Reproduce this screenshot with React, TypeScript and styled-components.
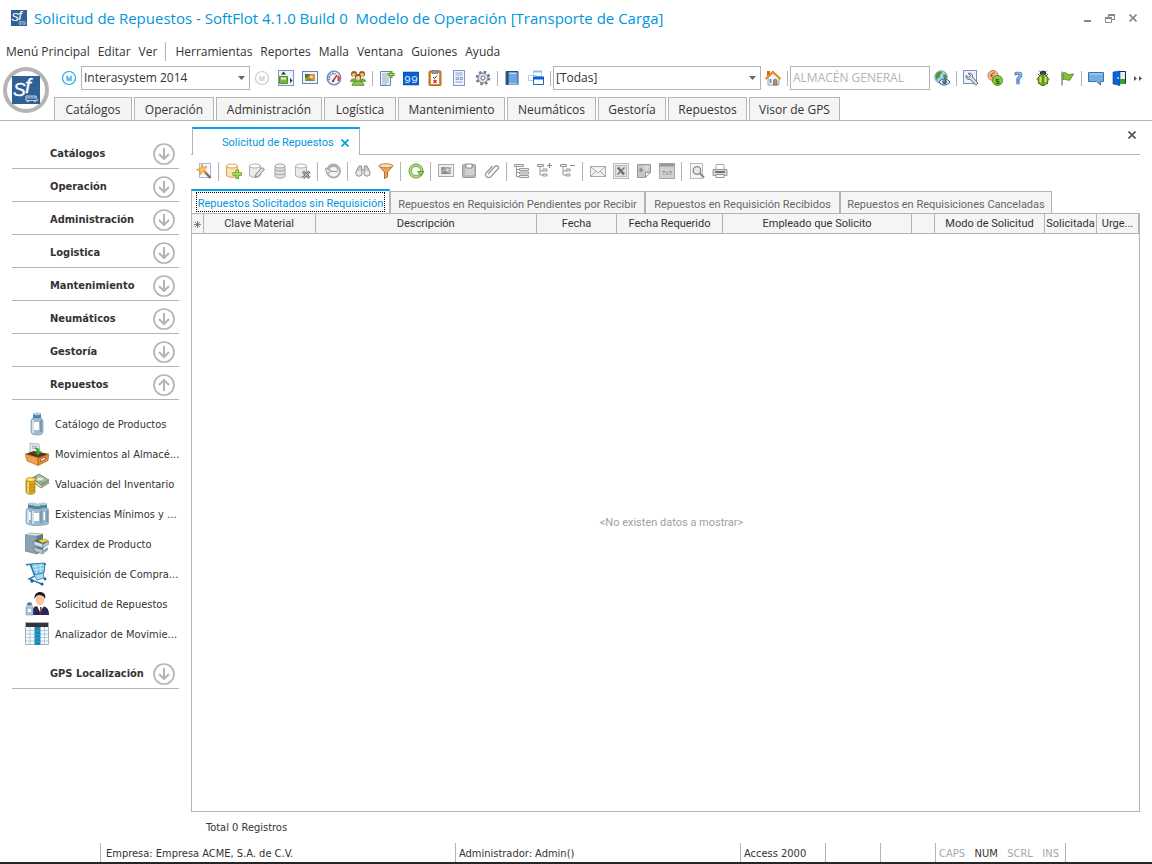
import React from "react";
import styled, { createGlobalStyle, css } from "styled-components";

const ui = `"Open Sans", "Noto Sans", sans-serif`;
const compact = `"DejaVu Sans Condensed", "DejaVu Sans", sans-serif`;
const gridFont = `Roboto, "Liberation Sans", sans-serif`;
const line = "#b4b4b4";
const blue = "#0096dc";
const accent = "#00a2f4";

const GlobalStyle = createGlobalStyle`
  *, *::before, *::after { box-sizing: border-box; }
  body { margin: 0; background: #fff; color: #333; font-family: ${ui}; font-size: 12px; }
  button, select, input { font: inherit; color: inherit; margin: 0; }
  ul { list-style: none; margin: 0; padding: 0; }
`;

const Page = styled.div`
  display: flex;
  flex-direction: column;
  min-height: 100vh;
`;

/* ---------- title bar and menu ---------- */

const TitleBar = styled.header`
  display: flex;
  align-items: center;
  gap: 7px;
  height: 37px;
  padding: 0 11px 1px;
`;
const Title = styled.h1`
  flex: 1;
  margin: 0;
  font-size: 15px;
  font-weight: 400;
  line-height: 20px;
  color: ${blue};
  white-space: pre;
`;
const WindowButtons = styled.div`
  display: flex;
  gap: 7px;
`;
const bareButton = css`
  display: flex;
  align-items: center;
  justify-content: center;
  border: 0;
  padding: 0;
  background: none;
`;
const WindowButton = styled.button`
  ${bareButton}
  width: 16px;
  height: 16px;
`;
const MenuBar = styled.nav`
  display: flex;
  align-items: center;
  height: 29px;
  padding-left: 2px;
`;
const MenuItem = styled.button`
  ${bareButton}
  padding: 0 4px;
  line-height: 20px;
  white-space: nowrap;
`;
const MenuRule = styled.span`
  width: 1px;
  height: 19px;
  margin: 0 5px 0 4px;
  background: ${line};
`;

/* ---------- main tool bar ---------- */

const Ribbon = styled.div`
  display: flex;
  border-bottom: 1px solid ${line};
`;
const LogoBox = styled.div`
  flex: none;
  width: 54px;
  padding: 1px 0 0 3px;
`;
const RibbonBody = styled.div`
  flex: 1;
  min-width: 0;
`;
const ToolRow = styled.div`
  display: flex;
  align-items: center;
  height: 24px;
  padding-left: 3px;
  margin-bottom: 7px;
`;
const ToolButton = styled.button<{ $w?: number }>`
  ${bareButton}
  flex: none;
  width: ${(p) => p.$w ?? 24}px;
  height: 24px;
`;
const Divider = styled.span<{ $w?: number }>`
  flex: none;
  display: flex;
  justify-content: center;
  width: ${(p) => p.$w ?? 5}px;
  &::before {
    content: "";
    width: 1px;
    height: ${(p) => (p.$w ? 19 : 15)}px;
    background: ${line};
  }
`;
const Combo = styled.label<{ $w: number }>`
  flex: none;
  display: grid;
  align-items: center;
  width: ${(p) => p.$w}px;
  height: 24px;
  border: 1px solid ${line};
  > * { grid-area: 1 / 1; }
  svg { justify-self: end; margin-right: 4px; pointer-events: none; }
`;
const Select = styled.select`
  appearance: none;
  width: 100%;
  height: 22px;
  padding: 0 18px 2px 2px;
  border: 0;
  border-radius: 0;
  background: none;
  outline: none;
`;
const StoreInput = styled.input`
  flex: none;
  width: 140px;
  height: 24px;
  padding: 0 2px 2px;
  border: 1px solid ${line};
  background: #fff;
  color: #b4b4b4;
`;
const ModuleTabs = styled.nav`
  display: flex;
  gap: 2px;
`;
const ModuleTab = styled.button<{ $w: number }>`
  width: ${(p) => p.$w}px;
  height: 23px;
  padding: 1px 0 0;
  border: 1px solid ${line};
  border-bottom: 0;
  background: #f5f5f5;
  line-height: 21px;
  white-space: nowrap;
`;

/* ---------- side bar ---------- */

const Body = styled.div`
  flex: 1;
  display: flex;
`;
const SideBar = styled.aside`
  flex: none;
  width: 191px;
  padding: 15px 12px 0;
  font-family: ${compact};
  font-size: 11px;
`;
const SectionButton = styled.button`
  display: flex;
  align-items: center;
  justify-content: space-between;
  width: 167px;
  height: 33px;
  padding: 3px 4px 0 38px;
  border: 0;
  border-bottom: 1px solid ${line};
  background: none;
  font-weight: 700;
  white-space: nowrap;
`;
const SectionList = styled.ul`
  && { padding: 9px 0 7px; }
`;
const SideLink = styled.a`
  display: flex;
  align-items: center;
  gap: 6px;
  height: 30px;
  padding-left: 13px;
  color: #333;
  text-decoration: none;
  white-space: nowrap;
  svg { flex: none; }
`;

/* ---------- document ---------- */

const Doc = styled.main`
  flex: 1;
  min-width: 0;
  display: flex;
  flex-direction: column;
  padding: 6px 12px 0 0;
  font-family: ${gridFont};
  font-size: 11px;
`;
const DocTabs = styled.div`
  display: flex;
  justify-content: space-between;
  align-items: flex-start;
  height: 28px;
  border-bottom: 1px solid ${line};
`;
const DocTab = styled.div`
  display: flex;
  align-items: center;
  justify-content: space-between;
  width: 168px;
  height: 28px;
  margin-left: 1px;
  padding: 1px 9px 0 29px;
  border: 1px solid ${line};
  border-top: 2px solid ${accent};
  border-bottom: 0;
  background: #fff;
  color: ${blue};
  white-space: nowrap;
`;
const CloseButton = styled.button`
  ${bareButton}
  width: 10px;
  height: 16px;
`;
const CloseAll = styled(CloseButton)`
  margin-right: 3px;
`;
const DocTools = styled.div`
  display: flex;
  align-items: center;
  height: 34px;
  padding: 0 0 2px 1px;
`;
const ViewTabs = styled.div`
  display: flex;
  align-items: flex-end;
  height: 24px;
`;
const ViewTab = styled.button<{ $w: number; $active?: boolean }>`
  ${bareButton}
  width: ${(p) => p.$w}px;
  height: ${(p) => (p.$active ? 24 : 22)}px;
  border: 1px solid ${line};
  border-bottom: 0;
  background: #f5f5f5;
  color: #666;
  white-space: nowrap;
  ${(p) =>
    p.$active &&
    css`
      border-top: 2px solid ${accent};
      background: #fff;
      color: ${blue};
      span { outline: 1px dotted #000; }
    `}
  span { padding: 4px 1px 0; line-height: 14px; }
`;
const GridFrame = styled.section`
  flex: 1;
  display: flex;
  flex-direction: column;
  border: 1px solid ${line};
`;
const Table = styled.table`
  width: 100%;
  table-layout: fixed;
  border-collapse: collapse;
`;
const Th = styled.th<{ $w?: number }>`
  width: ${(p) => (p.$w ? `${p.$w}px` : "auto")};
  height: 19px;
  padding: 2px 0 0;
  border-right: 1px solid ${line};
  border-bottom: 1px solid ${line};
  background: #f5f5f5;
  font-weight: 400;
  text-align: center;
  line-height: 14px;
  white-space: nowrap;
  svg { display: block; margin: 0 auto; }
`;
const Empty = styled.p`
  flex: 1;
  display: flex;
  align-items: center;
  justify-content: center;
  margin: 0;
  padding-left: 12px;
  color: #a0a0a0;
`;
const Total = styled.p`
  margin: 0;
  padding: 8px 15px 7px;
  font-family: ${compact};
  line-height: 16px;
`;

/* ---------- status bar ---------- */

const StatusBar = styled.footer`
  display: flex;
  height: 21px;
  padding-left: 100px;
  border-bottom: 2px solid #262626;
  font-family: ${compact};
  font-size: 11px;
  line-height: 21px;
`;
const StatusCell = styled.div<{ $w?: number }>`
  flex: ${(p) => (p.$w ? `none` : "1")};
  width: ${(p) => (p.$w ? `${p.$w}px` : "auto")};
  padding-left: 3px;
  border-left: 1px solid ${line};
  white-space: nowrap;
`;
const Company = styled(StatusCell)`
  padding-left: 5px;
`;
const Keys = styled(StatusCell)`
  display: flex;
  justify-content: space-between;
  padding-right: 6px;
`;
const Key = styled.span<{ $on?: boolean }>`
  color: ${(p) => (p.$on ? "#333" : "#a8a8a8")};
`;

/* ---------- drawings ---------- */

const I = ({ children, s = 16, v = 16 }: { children: React.ReactNode; s?: number; v?: number }) => (
  <svg width={s} height={s} viewBox={`0 0 ${v} ${v}`} fill="none" aria-hidden="true">
    {children}
  </svg>
);

const Emblem = ({ s }: { s: number }) => (
  <svg width={s} height={s} viewBox="0 0 28 28" aria-hidden="true">
    <rect width="28" height="28" fill="#2f6096" />
    <text x="1" y="20" fontFamily="Liberation Sans" fontStyle="italic" fontSize="19" fill="#fff" stroke="#fff" strokeWidth=".3">S</text>
    <text x="13" y="17" fontFamily="Liberation Sans" fontStyle="italic" fontSize="21" fill="#fff" stroke="#fff" strokeWidth=".3">f</text>
    <path d="M14 20h10l1.500 4.500H14z" fill="#2f6096" stroke="#b8cee2" />
    <path d="M17 20v2M20 20v2M23 20v2M14 22h10" stroke="#b8cee2" strokeWidth=".8" />
    <circle cx="16" cy="25" r="1.200" fill="#b8cee2" />
    <circle cx="23" cy="25" r="1.200" fill="#b8cee2" />
  </svg>
);
const Logo = () => (
  <svg width="46" height="46" viewBox="0 0 46 46" aria-hidden="true">
    <circle cx="23" cy="23" r="21" fill="#fff" stroke="#b4b4b4" strokeWidth="4" />
    <svg x="9" y="9" width="28" height="28"><Emblem s={28} /></svg>
  </svg>
);

const Mark = ({ c }: { c: string }) => (
  <I><circle cx="8" cy="8" r="6.500" stroke={c} strokeWidth="1.200" /><text x="5" y="10.500" fontFamily="Liberation Sans" fontSize="7" fill={c} stroke={c} strokeWidth=".3">M</text></I>
);
const LayoutIcon = () => (
  <I><rect x=".5" y=".5" width="15" height="15" fill="#edf3fb" stroke="#7d95c8" /><path d="M3 4.500l2.500-3 2.500 3zM12 8l2.500 2.500L12 13z" fill="#333" /><path d="M1.500 6.500h8v7h-8z" fill="#7cb342" stroke="#5b8c28" /><path d="M3 8.500h5" stroke="#e6f5d0" strokeWidth="2" /></I>
);
const PictureIcon = ({ gray }: { gray?: boolean }) => (
  <I><rect x=".5" y="1.500" width="15" height="12" fill={gray ? "#eee" : "#eef4fc"} stroke={gray ? "#aaa" : "#5f83c0"} /><path d="M3 4h10v7H3z" fill={gray ? "#b5b5b5" : "#d89a3c"} /><path d="M3 4h5l-3 4H3z" fill={gray ? "#999" : "#3d7a2c"} /><path d="M3 11l3-3 7 3z" fill={gray ? "#888" : "#5f9c3c"} /><circle cx="9.500" cy="7" r="2" fill={gray ? "#dcdcdc" : "#ffe07a"} stroke={gray ? "#888" : "#b5651d"} strokeWidth=".6" /></I>
);
const GaugeIcon = () => (
  <I><circle cx="8" cy="8" r="6.800" fill="#f4f8fd" stroke="#7184aa" strokeWidth="1.300" /><path d="M3.500 10a4.500 4.500 0 0 1 6-6" stroke="#4a7fd0" strokeWidth="2" strokeDasharray="1.500 1" /><path d="M12 6a4.500 4.500 0 0 1 0 5" stroke="#d33" strokeWidth="2" /><path d="M7 11l4-6" stroke="#c23a2b" strokeWidth="1.500" /><circle cx="7" cy="11" r="1.200" fill="#555" /></I>
);
const PeopleIcon = () => (
  <I><circle cx="4" cy="4" r="3" fill="#9a5a22" /><circle cx="12" cy="4" r="3" fill="#9a5a22" /><circle cx="4" cy="5" r="2" fill="#f0c08c" /><circle cx="12" cy="5" r="2" fill="#f0c08c" /><path d="M0 12c0-5 8-5 8 0zM8 12c0-5 8-5 8 0z" fill="#6fa83c" /><path d="M2 15.500c0-6 12-6 12 0z" fill="#8cc152" stroke="#3e7a1c" strokeWidth=".6" /><circle cx="8" cy="7" r="3" fill="#8c4f1c" /><circle cx="8" cy="8" r="2.200" fill="#f5cda0" /></I>
);
const DocPlusIcon = () => (
  <I><path d="M1.500 1.500h10v14h-10z" fill="#f3f7fc" stroke="#6b86b5" /><path d="M3 4h5M3 6h5M3 8h7M3 10h7M3 12h7M3 14h5" stroke="#8da5cc" /><path d="M8.500 4.500h7M12 1v7" stroke="#4e8f26" strokeWidth="3" /><path d="M9 4.500h6M12 1.500v6" stroke="#a4d65e" /></I>
);
const NinesIcon = () => (
  <I><rect y="2" width="16" height="13" fill="#0b5fd0" stroke="#083f92" strokeWidth=".5" /><text x="1" y="12.500" fontFamily="Liberation Mono" fontSize="11.500" fill="#d7ecff">99</text></I>
);
const ClipboardIcon = () => (
  <I><rect x="2" y="1" width="12" height="14.500" rx="1" fill="#dc8a30" stroke="#b56a19" /><path d="M4 3h8v11H4z" fill="#fff" /><path d="M5 .5h6v3H5z" fill="#8e9aa8" stroke="#5d6670" strokeWidth=".6" /><path d="M6 7l1.500 1.500L10 5.500" stroke="#333" /><path d="M6.500 10l3 3M9.500 10l-3 3" stroke="#c22" strokeWidth="1.200" /></I>
);
const FormIcon = () => (
  <I><rect x="2.500" y=".5" width="11" height="15" fill="#eef3fb" stroke="#8296c4" /><path d="M4.500 3h7M4.500 5h7M4.500 12h7" stroke="#8ba3d0" /><path d="M5 7.500h2.500v2H5zM9 7.500h2.500v2H9z" fill="#fff" stroke="#6f89bd" strokeWidth=".8" /></I>
);
const GearIcon = () => (
  <I><circle cx="8" cy="8" r="6.200" stroke="#6c7788" strokeWidth="2.200" strokeDasharray="2.450 2.420" /><circle cx="8" cy="8" r="5" fill="#dfe4ea" stroke="#6c7788" /><circle cx="8" cy="8" r="2" fill="#fff" stroke="#6c7788" /></I>
);
const BookIcon = () => (
  <I><path d="M2 1.500h12v13H2z" fill="#6fa6dc" stroke="#2a5288" /><path d="M2.500 2h2v12h-2z" fill="#23426b" /><path d="M6 3.500h6" stroke="#c6e0f6" /><path d="M4.500 14h9" stroke="#dce9f5" /></I>
);
const WindowsIcon = () => (
  <I><path d="M5.500 1.500h8v5h-8z" fill="#fff" stroke="#a9cdf5" /><path d="M5 1.500h9" stroke="#8fc0f2" strokeWidth="2" /><path d="M.5 5.500h8v5h-8z" fill="#fff" stroke="#a9cdf5" /><path d="M5.500 7.500h10v7h-10z" fill="#fff" stroke="#1668c8" /><path d="M5 8h11" stroke="#0b5fd0" strokeWidth="3" /></I>
);
const HomeIcon = () => (
  <I><path d="M2 1h3v5H2z" fill="#c86a20" /><path d="M3 8l5-5 6 5v7H3z" fill="#eef5fc" stroke="#7da7cf" /><path d="M0.500 9L8 2l7.500 7" stroke="#ef8a1c" strokeWidth="2.200" /><path d="M8.500 15v-4a1.700 1.700 0 0 1 3.500 0v4z" fill="#c58a5a" stroke="#8b5528" strokeWidth=".7" /><path d="M4 10h3M4 12h3M5.500 9v4" stroke="#5b86b5" strokeWidth=".8" /></I>
);
const GlobeEyeIcon = () => (
  <I><circle cx="7" cy="7" r="6.200" fill="#a8d0ee" stroke="#7898b8" /><path d="M2 4c2-3 5-3 6-2s-2 2-2 4-3 2-3 4S1 7 2 4zM9 5c2-2 4 0 4 2s-2 3-3 2z" fill="#4d9a33" /><path d="M5 12c2-4 8-4 11 0-3 4-9 4-11 0z" fill="#dfe6f5" stroke="#3f5080" /><circle cx="10.500" cy="11.800" r="2.200" fill="#35507f" /><circle cx="10" cy="11" r=".7" fill="#fff" /></I>
);
const WrenchIcon = () => (
  <I><rect x=".5" y=".5" width="13" height="13" fill="#eef3fb" stroke="#7d8fc0" /><path d="M5 3.500c2.500-1 5 .5 4.500 3.500l5.500 6-2.300 2.300-5.500-6C4 10 2.500 8 3 5.500l2.500 2 2-2z" fill="#d5dce6" stroke="#4d5b78" strokeWidth=".9" /></I>
);
const CoinsIcon = () => (
  <I><circle cx="6" cy="5.500" r="5" fill="#f7c096" stroke="#c76a31" /><path d="M8 3.500a2.500 2.500 0 1 0 0 4M3.500 5.500h3" stroke="#a34b1c" /><circle cx="10.500" cy="10.500" r="5" fill="#8ccb3f" stroke="#4f8c1d" /><text x="8.300" y="13.500" fontFamily="Liberation Sans" fontWeight="700" fontSize="8" fill="#23580b">$</text></I>
);
const HelpIcon = () => (
  <I><text x="3" y="13.500" fontFamily="DejaVu Sans" fontWeight="700" fontSize="15" fill="#8dbdec" stroke="#3a6fb0" strokeWidth=".7">?</text></I>
);
const BugIcon = () => (
  <I><path d="M3 4l2 2M13 4l-2 2M1.500 9h3M14.500 9h-3M3 14l2-2M13 14l-2-2" stroke="#444" /><path d="M5 4a3 3 0 0 1 6 0z" fill="#3b4560" stroke="#222a40" /><path d="M5.500 2L4 .5M10.500 2L12 .5" stroke="#444" strokeWidth=".8" /><ellipse cx="8" cy="9.800" rx="5" ry="5.700" fill="#86b82c" stroke="#466d12" /><path d="M8 4.500v11" stroke="#466d12" /><path d="M5.500 7v5M10.500 7v5" stroke="#c9e57f" strokeWidth="1.500" /></I>
);
const FlagIcon = () => (
  <I><path d="M3 1.500v14" stroke="#8d8d8d" strokeWidth="1.500" /><path d="M4 3c3-1.500 3.500 1.500 6 1.500 1.500 0 2.500-.5 4.500-.5l-3.500 6c-3 1-4-1.500-7-.5z" fill="#86bf3a" stroke="#4c8618" strokeWidth=".8" /></I>
);
const ChatIcon = () => (
  <I><path d="M.5 2.500h15v9h-3v3.500l-4-3.500h-8z" fill="#74aee2" stroke="#3a74ae" /><path d="M1.500 4h13" stroke="#b4d6f3" /></I>
);
const DoorIcon = () => (
  <I><path d="M7 1.500h6.500v12H7z" fill="#e9eef3" stroke="#1c2c44" /><path d="M1 2l7-1v14.500L1 14z" fill="#0a66d6" stroke="#0a3d8c" strokeWidth=".6" /><path d="M8 9h5v5H8z" fill="#2fa52f" /><circle cx="6.200" cy="8" r=".9" fill="#cfe5ff" /></I>
);
const Caret = () => (
  <svg width="7" height="4" viewBox="0 0 7 4" aria-hidden="true"><path d="M0 0h7L3.500 4z" fill="#666" /></svg>
);

/* document tools */
const WandIcon = () => (
  <I><rect x="3.500" y=".5" width="11" height="14" fill="#f6f8fc" stroke="#a9b9dc" /><path d="M8 8l6.500 7" stroke="#8a6a4a" strokeWidth="2.500" /><path d="M6 1l1 3.500 4-1-2.500 3 2 3.500-3.500-1.500L4 12l0-4-3.500-1.500 4-1z" fill="#fbc25a" stroke="#d98b25" strokeWidth=".7" /></I>
);
const Drum = ({ body, edge, children }: { body: string; edge: string; children?: React.ReactNode }) => (
  <I><path d="M.5 3v9c0 3 11 3 11 0V3" fill={body} stroke={edge} /><ellipse cx="6" cy="3" rx="5.500" ry="2" fill="#fff" stroke={edge} />{children}</I>
);
const AddIcon = () => (
  <Drum body="#fbe3b0" edge="#d9a24a"><path d="M6.500 11h9.500M11.300 6.500v9.500" stroke="#5c9a30" strokeWidth="3.600" /><path d="M7.200 11h8.200M11.300 7v8.500" stroke="#a4d65e" strokeWidth="1.800" /></Drum>
);
const EditIcon = () => (
  <Drum body="#eaeaea" edge="#b0b0b0"><path d="M6 14.500l1-3.500 6-6.500 2.500 2-6 6.500z" fill="#ddd" stroke="#888" /></Drum>
);
const DrumIcon = () => (
  <I><path d="M3 3v10c0 3 10 3 10 0V3" fill="#dedede" stroke="#a5a5a5" /><path d="M3 6.500c0 2 10 2 10 0M3 10c0 2 10 2 10 0" stroke="#a5a5a5" /><ellipse cx="8" cy="3" rx="5" ry="2" fill="#f6f6f6" stroke="#a5a5a5" /></I>
);
const DeleteIcon = () => (
  <Drum body="#eaeaea" edge="#b0b0b0"><path d="M8 8.500l6.500 6.500M14.500 8.500L8 15" stroke="#777" strokeWidth="3" /><path d="M8 8.500l6.500 6.500M14.500 8.500L8 15" stroke="#ccc" /></Drum>
);
const UndoIcon = () => (
  <I><circle cx="8.500" cy="8" r="6.500" fill="#f4f4f4" stroke="#b0b0b0" strokeWidth="2" /><path d="M4 7.500a4.500 4.500 0 0 1 9 0" stroke="#a0a0a0" strokeWidth="1.300" /><path d="M0 5l2 6 5-3z" fill="#ddd" stroke="#999" strokeWidth=".8" /><path d="M6.500 8.500h6" stroke="#999" strokeWidth="1.200" /></I>
);
const FindIcon = () => (
  <I><circle cx="4" cy="10" r="3.200" fill="#e8e8e8" stroke="#8d8d8d" /><circle cx="12" cy="10" r="3.200" fill="#e8e8e8" stroke="#8d8d8d" /><path d="M1.500 8L4 3h2.500l.5 5M14.500 8L12 3H9.500L9 8M7 7h2" fill="#ccc" stroke="#8d8d8d" /></I>
);
const FilterIcon = () => (
  <I><path d="M1 3l5.500 6v6.500l3-1.500V9L15 3z" fill="#e9a85d" stroke="#b26c25" /><ellipse cx="8" cy="2.800" rx="7" ry="2" fill="#fbe0bc" stroke="#c37d35" /></I>
);
const RefreshIcon = () => (
  <I><circle cx="8" cy="8" r="5.800" stroke="#6fa741" strokeWidth="3.400" /><circle cx="8" cy="8" r="5.800" stroke="#b3db88" strokeWidth="1.600" /><path d="M9.500 8.500h6.500L12.800 13z" fill="#9ccc6a" stroke="#578c2c" strokeWidth=".8" /></I>
);
const PasteIcon = () => (
  <I><rect x="1.500" y="1.500" width="13" height="13" rx="1" fill="#b8b8b8" stroke="#9a9a9a" /><path d="M4 4h9v8H4z" fill="#d0d0d0" /><path d="M5 1h6v4H5z" fill="#fff" stroke="#888" /></I>
);
const ClipIcon = () => (
  <I><path d="M4 11l7-7.500c2-2 4.500.5 2.800 2.500L7 13.500C4 16.500-.5 12.500 2.500 9.500L8.500 3" stroke="#999" strokeWidth="1.300" /></I>
);
const TreeIcon = () => (
  <I><path d="M2.500 3v11M2.500 6.500h3M2.500 9.500h3M2.500 13.500h3" stroke="#999" /><path d="M.5 1.500h9v2h-9zM5.500 5.500h9v2h-9zM5.500 9h9v2h-9zM5.500 12.500h9v2h-9z" fill="#eee" stroke="#999" /></I>
);
const BranchIcon = ({ plus }: { plus?: boolean }) => (
  <I><path d="M3 4v8h3M3 8h3" stroke="#999" /><path d="M.5 1.500h6v2h-6zM6 6h4v2H6zM6 11h4v2H6z" fill="#eee" stroke="#999" /><path d="M10 2.500h5" stroke="#888" />{plus && <path d="M12.500 0v5" stroke="#888" />}</I>
);
const MailIcon = () => (
  <I><rect x=".5" y="3.500" width="15" height="10" fill="#f4f4f4" stroke="#aaa" /><path d="M1 4l7 6 7-6M1 13l5-5M15 13l-5-5" stroke="#aaa" /></I>
);
const SheetIcon = () => (
  <I><rect x=".5" y=".5" width="15" height="15" fill="#eee" stroke="#bbb" /><rect x="2.500" y="2.500" width="11" height="11" fill="#ddd" stroke="#bbb" /><path d="M5 4.500l6 7" stroke="#6e6e6e" strokeWidth="2.600" /><path d="M11.500 4.500l-7 7" stroke="#6e6e6e" strokeWidth="1.200" /></I>
);
const NoteIcon = () => (
  <I><path d="M1.500 1.500h13v8l-5 5h-8z" fill="#c6c6c6" stroke="#999" /><path d="M14.500 9.500h-5v5z" fill="#eee" stroke="#999" /><circle cx="5" cy="7" r="1.800" fill="#888" /><path d="M8 4h5M8 6h4" stroke="#eee" /></I>
);
const TxtIcon = () => (
  <I><rect x=".5" y=".5" width="15" height="15" fill="#d0d0d0" stroke="#a8a8a8" /><path d="M.5 2h15" stroke="#999" strokeWidth="3" /><text x="3" y="11.500" fontFamily="Liberation Sans" fontSize="6" fill="#777">TxT</text></I>
);
const PreviewIcon = () => (
  <I><rect x="1.500" y=".5" width="12" height="15" fill="#f6f6f6" stroke="#bbb" /><circle cx="8" cy="7.500" r="3.800" fill="#e8e8e8" stroke="#888" strokeWidth="1.300" /><path d="M11 10.500l4 4" stroke="#888" strokeWidth="2" /></I>
);
const PrintIcon = () => (
  <I><path d="M4 1.500h8v5H4z" fill="#fff" stroke="#aaa" /><path d="M1 6.500h14v6H1z" fill="#d9d9d9" stroke="#999" /><path d="M3 9h10" stroke="#777" strokeWidth="2" /><path d="M4 11.500h8v3H4z" fill="#f8f8f8" stroke="#999" /></I>
);

/* side bar pictures, 24 x 24 */
const Jar = ({ x = 0, y = 0 }: { x?: number; y?: number }) => (
  <g transform={`translate(${x} ${y})`}>
    <path d="M3 6q-2 1-2 3v11q0 3 6 3t6-3V9q0-2-2-3z" fill="#9dbace" stroke="#7f9cb3" strokeWidth=".7" />
    <path d="M3 8v13" stroke="#e3eff7" strokeWidth="1.500" />
    <path d="M11 8v12" stroke="#7190aa" strokeWidth="1.500" />
    <path d="M3 1.500q4-1.500 8 0V6H3z" fill="#55809e" />
    <ellipse cx="7" cy="2" rx="4" ry="1.200" fill="#a9cfe0" />
    <path d="M4 10h5v8H4z" fill="#fff" />
  </g>
);
const ProductIcon = () => <I s={24} v={24}><Jar x={5} /></I>;
const StockIcon = () => <I s={24} v={24}><Jar x={0} /><Jar x={11} /><Jar x={5} y={1} /></I>;
const DrawerIcon = () => (
  <I s={24} v={24}><path d="M5 1l9 1 1 10-10-1z" fill="#e3e8ec" stroke="#9aa5ad" strokeWidth=".7" /><path d="M7 4l5 .5M7 6l3 .3" stroke="#9aa5ad" /><path d="M0 12l9-3 15 3-10 4z" fill="#5a3517" /><path d="M10 6c3-.5 4.500 1 4 4l2-.5-2.500 3.500-3.500-2 2-.5c0-2-.5-3.500-2-4.500z" fill="#2eb82e" stroke="#1b861b" strokeWidth=".5" /><path d="M0 12l13 4v7.500L2 19z" fill="#f0a04b" stroke="#b5651d" strokeWidth=".6" /><path d="M13 16l11-4-1 6.500-10 5z" fill="#e08a3c" stroke="#a4541a" strokeWidth=".6" /><path d="M15.500 17l5-2v2.500l-5 2z" fill="#f7ead8" stroke="#754016" strokeWidth=".6" /></I>
);
const MoneyIcon = () => (
  <I s={24} v={24}><path d="M7 6l7-4 10 6-8 5z" fill="#a9baa0" stroke="#5a7150" strokeWidth=".7" /><path d="M7 6v3l9 7 8-5V8l-8 5z" fill="#d5dccb" stroke="#5a7150" strokeWidth=".7" /><path d="M9 4.500l10 7M16 14.500l7-4.500" stroke="#6d8460" /><ellipse cx="15" cy="7" rx="3" ry="1.500" fill="#e9efe2" /><path d="M1 8v12c0 3 9 3 9 0V8z" fill="#d9a51b" stroke="#a87808" strokeWidth=".7" /><path d="M1 11c0 2.500 9 2.500 9 0M1 14c0 2.500 9 2.500 9 0M1 17c0 2.500 9 2.500 9 0" stroke="#a87808" strokeWidth=".7" /><path d="M3 10v11" stroke="#fbe382" strokeWidth="1.500" /><ellipse cx="5.500" cy="7.500" rx="4.500" ry="2" fill="#ffe169" stroke="#b98a0e" strokeWidth=".7" /></I>
);
const KardexIcon = () => (
  <I s={24} v={24}><path d="M0 3l12 1v18L0 19z" fill="#8ba2b3" stroke="#5e7485" strokeWidth=".6" /><path d="M0 3l6-2 12 1-6 2z" fill="#d9e3ea" stroke="#8599a6" strokeWidth=".6" /><path d="M12 4l6-2v17l-6 3z" fill="#60798c" /><path d="M9 9l5-2 10 2-4 4z" fill="#47565f" /><path d="M13 8l8-1 2 2-6 2z" fill="#f9ce3f" stroke="#b98a0e" strokeWidth=".5" /><path d="M9 9l9 3v4l-9-3z" fill="#d5dee4" stroke="#5e7485" strokeWidth=".6" /><path d="M18 12l6-3v3l-6 4zM9 15l9 3v4l-9-3z" fill="#bac7d0" stroke="#5e7485" strokeWidth=".6" /><path d="M18 18l5-3v3l-5 4z" fill="#90a4b2" /></I>
);
const CartIcon = () => (
  <I s={24} v={24}><path d="M6 2l14-1-1 10-10 2z" fill="#83c8e6" stroke="#267ca8" /><path d="M10 2l2 10M15 1.500l1 9M7 5l12-2M8 8l11-1.500" stroke="#d2eef9" strokeWidth=".8" /><path d="M1 3l4-1 5 12-6 3 13 5M19 3l2-1" stroke="#2580b0" strokeWidth="1.400" /><path d="M9 13l9-2 1 5-7 2z" fill="#aadcf0" stroke="#267ca8" strokeWidth=".8" /><circle cx="7" cy="19" r="1.700" fill="#1f5f87" /><circle cx="17" cy="22" r="1.600" fill="#1f5f87" /><circle cx="20" cy="17" r="1.400" fill="#1f5f87" /></I>
);
const ClerkIcon = () => (
  <I s={24} v={24}><path d="M7 23c0-8 2-9 8-9s9 2 9 9z" fill="#252a55" /><path d="M12 14l3 6 4-6z" fill="#fff" /><path d="M15 15l1.500 0 .5 5-1.500 2z" fill="#b32020" /><ellipse cx="15" cy="7.500" rx="4.500" ry="6" fill="#f4c7a0" /><path d="M9.500 7C9 1 13 0 15 0c5 0 6 4 5 7-1-3-3-4-6-4-2 0-3 1-4.500 4z" fill="#1c1c1c" /><path d="M2 12h5v2l1 1v8H1v-8l1-1z" fill="#a9c3d6" stroke="#7f9cb3" strokeWidth=".6" /><path d="M2.500 10.500h4v2.500h-4z" fill="#417392" /><path d="M3 17h3v3H3z" fill="#fff" /></I>
);
const AnalyzerIcon = () => (
  <I s={24} v={24}><path d="M.5.5h23v22H.5z" fill="#f5f9fc" stroke="#a8b1b8" /><path d="M1 1h22v4H1z" fill="#30363b" /><path d="M1 8.500h22M1 12h22M1 15.500h22M1 19h22M5 5v18M19.500 5v18" stroke="#9fc4de" strokeWidth=".8" /><path d="M9.500 5h6v18h-6z" fill="#1788be" /><path d="M10 9h5M10 12.500h5M10 16h5M10 19.500h5" stroke="#4aa8d4" strokeWidth=".6" /></I>
);
const Arrow = ({ up }: { up?: boolean }) => (
  <svg width="22" height="22" viewBox="0 0 22 22" fill="none" stroke="#b4b4b4" aria-hidden="true">
    <circle cx="11" cy="11" r="10" strokeWidth="1.700" />
    <path d={up ? "M11 17V6M6 11l5-5 5 5" : "M11 5v11M6 11l5 5 5-5"} strokeWidth="2" />
  </svg>
);
const Cross = ({ c }: { c: string }) => (
  <svg width="8" height="8" viewBox="0 0 8 8" aria-hidden="true"><path d="M.5.5l7 7M7.500.5l-7 7" stroke={c} strokeWidth="1.700" /></svg>
);

/* ---------- data ---------- */

type Tool = [string, React.ReactNode] | null;

const toolsA: Tool[] = [["Diseño", <LayoutIcon />], ["Imagen", <PictureIcon />], ["Indicadores", <GaugeIcon />], ["Usuarios", <PeopleIcon />], null, ["Nuevo reporte", <DocPlusIcon />], ["Contadores", <NinesIcon />], ["Pendientes", <ClipboardIcon />], ["Formulario", <FormIcon />], ["Opciones", <GearIcon />], null, ["Bitácora", <BookIcon />], ["Ventanas", <WindowsIcon />], null];
const toolsB: Tool[] = [["Ver sitio", <GlobeEyeIcon />], null, ["Configurar", <WrenchIcon />], ["Monedas", <CoinsIcon />], ["Ayuda", <HelpIcon />], ["Depurar", <BugIcon />], ["Marcar", <FlagIcon />], null, ["Mensajes", <ChatIcon />], ["Salir", <DoorIcon />]];
const docTools: Tool[] = [["Asistente", <WandIcon />], null, ["Agregar", <AddIcon />], ["Editar", <EditIcon />], ["Guardar", <DrumIcon />], ["Eliminar", <DeleteIcon />], null, ["Deshacer", <UndoIcon />], null, ["Buscar", <FindIcon />], ["Filtrar", <FilterIcon />], null, ["Actualizar", <RefreshIcon />], null, ["Imagen", <PictureIcon gray />], ["Pegar", <PasteIcon />], ["Adjuntar", <ClipIcon />], null, ["Árbol", <TreeIcon />], ["Expandir", <BranchIcon plus />], ["Contraer", <BranchIcon />], null, ["Correo", <MailIcon />], ["Excel", <SheetIcon />], ["Nota", <NoteIcon />], ["Texto", <TxtIcon />], null, ["Vista previa", <PreviewIcon />], ["Imprimir", <PrintIcon />]];

const Tools = ({ items, w, dw }: { items: Tool[]; w?: number; dw?: number }) => (
  <>
    {items.map((t, i) =>
      t ? <ToolButton key={i} $w={w} aria-label={t[0]}>{t[1]}</ToolButton> : <Divider key={i} $w={dw} />
    )}
  </>
);

const modules: [string, number][] = [["Catálogos", 78], ["Operación", 80], ["Administración", 106], ["Logística", 72], ["Mantenimiento", 107], ["Neumáticos", 89], ["Gestoría", 68], ["Repuestos", 79], ["Visor de GPS", 91]];
const sections = ["Catálogos", "Operación", "Administración", "Logistica", "Mantenimiento", "Neumáticos", "Gestoría"];
const links: [string, React.ReactNode][] = [
  ["Catálogo de Productos", <ProductIcon />],
  ["Movimientos al Almacé...", <DrawerIcon />],
  ["Valuación del Inventario", <MoneyIcon />],
  ["Existencias Mínimos y ...", <StockIcon />],
  ["Kardex de Producto", <KardexIcon />],
  ["Requisición de Compra...", <CartIcon />],
  ["Solicitud de Repuestos", <ClerkIcon />],
  ["Analizador de Movimie...", <AnalyzerIcon />],
];
const views: [string, number][] = [["Repuestos Solicitados sin Requisición", 199], ["Repuestos en Requisición Pendientes por Recibir", 255], ["Repuestos en Requisición Recibidos", 195], ["Repuestos en Requisiciones Canceladas", 212]];
const columns: [string, number?][] = [["Clave Material", 112], ["Descripción"], ["Fecha", 80], ["Fecha Requerido", 106], ["Empleado que Solicito", 189], ["", 23], ["Modo de Solicitud", 110], ["Solicitada", 52], ["Urge...", 42]];

export default function App() {
  return (
    <Page>
      <GlobalStyle />
      <TitleBar>
        <Emblem s={16} />
        <Title>{"Solicitud de Repuestos - SoftFlot 4.1.0 Build 0  Modelo de Operación [Transporte de Carga]"}</Title>
        <WindowButtons>
          <WindowButton aria-label="Minimizar"><svg width="10" height="10"><path d="M2 8h7" stroke="#888" strokeWidth="2" /></svg></WindowButton>
          <WindowButton aria-label="Restaurar"><svg width="10" height="9" fill="none" stroke="#888"><path d="M3.500 3V1h6v4.500H7" strokeWidth="1.200" /><path d="M.5 4h6v4.500h-6z" /><path d="M0 4h7M3 1h7" strokeWidth="2" /></svg></WindowButton>
          <WindowButton aria-label="Cerrar"><Cross c="#888" /></WindowButton>
        </WindowButtons>
      </TitleBar>
      <MenuBar>
        {["Menú Principal", "Editar", "Ver"].map((m) => <MenuItem key={m}>{m}</MenuItem>)}
        <MenuRule />
        {["Herramientas", "Reportes", "Malla", "Ventana", "Guiones", "Ayuda"].map((m) => <MenuItem key={m}>{m}</MenuItem>)}
      </MenuBar>
      <Ribbon>
        <LogoBox><Logo /></LogoBox>
        <RibbonBody>
          <ToolRow>
            <ToolButton aria-label="Modelo"><Mark c="#1ea7e8" /></ToolButton>
            <Combo $w={169}>
              <Select aria-label="Modelo de operación"><option>Interasystem 2014</option></Select>
              <Caret />
            </Combo>
            <ToolButton aria-label="Modelo anterior"><Mark c="#ccc" /></ToolButton>
            <Tools items={toolsA} />
            <Combo $w={208}>
              <Select aria-label="Sucursal"><option>[Todas]</option></Select>
              <Caret />
            </Combo>
            <ToolButton aria-label="Inicio"><HomeIcon /></ToolButton>
            <Divider />
            <StoreInput aria-label="Almacén" defaultValue="ALMACÉN GENERAL" />
            <Tools items={toolsB} />
            <ToolButton $w={12} aria-label="Más"><svg width="8" height="5"><path d="M0 0l3 2.500L0 5zM5 0l3 2.500L5 5z" fill="#555" /></svg></ToolButton>
          </ToolRow>
          <ModuleTabs>
            {modules.map(([m, w]) => <ModuleTab key={m} $w={w}>{m}</ModuleTab>)}
          </ModuleTabs>
        </RibbonBody>
      </Ribbon>
      <Body>
        <SideBar>
          {sections.map((s) => <SectionButton key={s}>{s}<Arrow /></SectionButton>)}
          <SectionButton aria-expanded="true">Repuestos<Arrow up /></SectionButton>
          <SectionList>
            {links.map(([t, icon]) => <li key={t}><SideLink href="#">{icon}{t}</SideLink></li>)}
          </SectionList>
          <SectionButton>GPS Localización<Arrow /></SectionButton>
        </SideBar>
        <Doc>
          <DocTabs>
            <DocTab>Solicitud de Repuestos<CloseButton aria-label="Cerrar pestaña"><Cross c="#00a2e0" /></CloseButton></DocTab>
            <CloseAll aria-label="Cerrar documento"><Cross c="#555" /></CloseAll>
          </DocTabs>
          <DocTools><Tools items={docTools} w={23} dw={7} /></DocTools>
          <ViewTabs role="tablist">
            {views.map(([v, w], i) => <ViewTab key={v} role="tab" $w={w} $active={i === 0}><span>{v}</span></ViewTab>)}
          </ViewTabs>
          <GridFrame>
            <Table>
              <thead>
                <tr>
                  <Th $w={11}><svg width="7" height="7" stroke="#666" aria-hidden="true"><path d="M3.500 0v7M0 3.500h7M1 1l5 5M6 1L1 6" strokeWidth=".8" /></svg></Th>
                  {columns.map(([c, w], i) => <Th key={i} $w={w}>{c}</Th>)}
                </tr>
              </thead>
            </Table>
            <Empty>&lt;No existen datos a mostrar&gt;</Empty>
          </GridFrame>
          <Total>Total 0 Registros</Total>
        </Doc>
      </Body>
      <StatusBar>
        <Company>Empresa: Empresa ACME, S.A. de C.V.</Company>
        <StatusCell $w={285}>Administrador: Admin()</StatusCell>
        <StatusCell $w={85}>Access 2000</StatusCell>
        <StatusCell $w={55} />
        <StatusCell $w={55} />
        <Keys $w={130}><Key>CAPS</Key><Key $on>NUM</Key><Key>SCRL</Key><Key>INS</Key></Keys>
        <StatusCell $w={87} />
      </StatusBar>
    </Page>
  );
}
